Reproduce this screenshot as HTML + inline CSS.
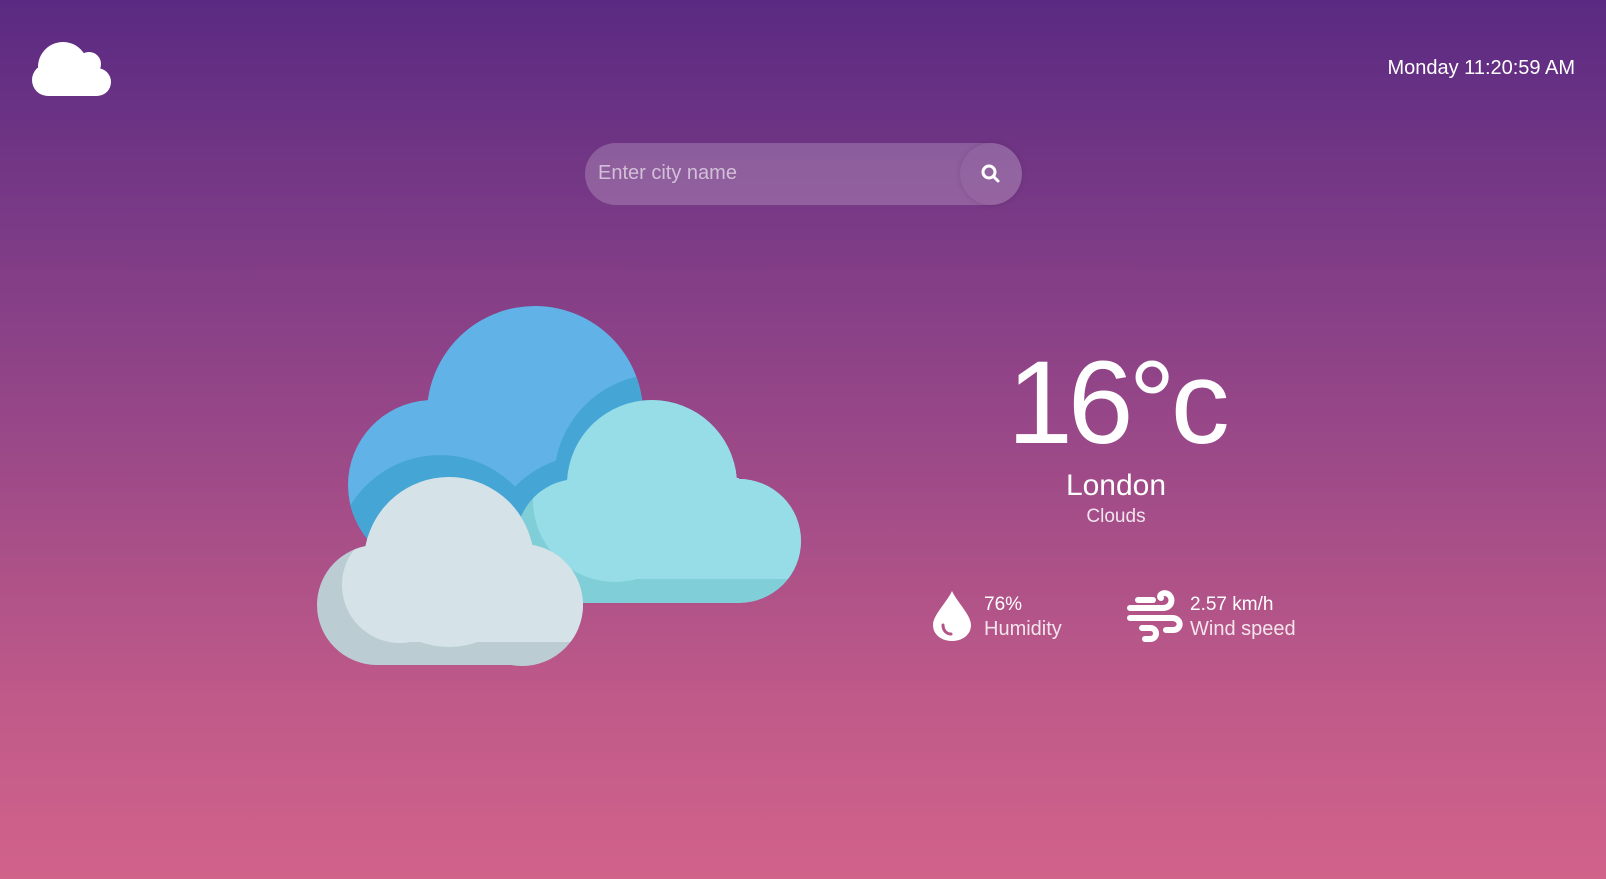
<!DOCTYPE html>
<html><head><meta charset="utf-8"><style>
html,body{margin:0;padding:0}
body{width:1606px;height:879px;overflow:hidden;position:relative;background:linear-gradient(180deg,#5a2a82 0%,#7a3a86 25%,#a04b88 55%,#c05a89 80%,#d1628a 100%);font-family:"Liberation Sans",sans-serif;color:#fff}
.abs{position:absolute}
</style></head><body>
<svg class="abs" style="left:0;top:0" width="1606" height="879">
  <g fill="#fff">
    <circle cx="63" cy="67" r="25"/>
    <circle cx="89" cy="64" r="12"/>
    <circle cx="97" cy="82" r="14"/>
    <circle cx="48" cy="80" r="16"/>
    <rect x="48" y="68" width="49" height="28"/>
  </g>
  <defs>
    <clipPath id="blue"><circle cx="535" cy="414" r="108"/><circle cx="433" cy="485" r="85"/></clipPath>
    <clipPath id="cyan"><circle cx="652" cy="485" r="85"/><circle cx="739" cy="541" r="62"/><circle cx="578" cy="541" r="62"/><rect x="578" y="478" width="161" height="125"/></clipPath>
    <clipPath id="grey"><circle cx="449" cy="562" r="85"/><circle cx="377" cy="605" r="60"/><circle cx="522" cy="605" r="61"/><rect x="377" y="544" width="145" height="121"/></clipPath>
  </defs>
  <g clip-path="url(#blue)">
    <rect x="300" y="290" width="400" height="300" fill="#61b3e7"/>
    <circle cx="660" cy="480" r="106" fill="#45a6d6"/>
    <circle cx="440" cy="560" r="105" fill="#45a6d6"/>
    <circle cx="590" cy="560" r="105" fill="#45a6d6"/>
  </g>
  <g clip-path="url(#cyan)">
    <rect x="500" y="380" width="320" height="240" fill="#80ced7"/>
    <circle cx="652" cy="485" r="85" fill="#97dde8"/>
    <circle cx="615" cy="500" r="82" fill="#97dde8"/>
    <rect x="600" y="470" width="210" height="109" fill="#97dde8"/>
    <circle cx="739" cy="520" r="58" fill="#97dde8"/>
  </g>
  <g clip-path="url(#grey)">
    <rect x="300" y="470" width="300" height="210" fill="#bbcdd2"/>
    <circle cx="449" cy="562" r="85" fill="#d5e2e7"/>
    <circle cx="400" cy="585" r="58" fill="#d5e2e7"/>
    <rect x="400" y="540" width="190" height="102" fill="#d5e2e7"/>
  </g>
  <path d="M952 591 C947 602 933 615 933 625 C933 635 942 641 952 641 C962 641 971 635 971 625 C971 615 957 602 952 591 Z" fill="#fff"/>
  <path d="M943 625 C943 631 947 634 951 634" stroke="#b25586" stroke-width="3" fill="none" stroke-linecap="round"/>
  <g stroke="#fff" stroke-width="6" fill="none" stroke-linecap="round">
    <path d="M1130 608 H1163 C1172 608 1174 598 1168 594 C1163 591 1158 596 1161 598"/>
    <path d="M1130 618 H1172 C1182 618 1182 630 1173 630 H1166"/>
    <path d="M1142 628 H1150 C1158 628 1158 639 1150 639 H1145"/>
    <path d="M1138 600 H1153"/>
  </g>
</svg>
<div class="abs" style="right:31px;top:57px;font-size:20px;">Monday 11:20:59 AM</div>
<div class="abs" style="left:585px;top:143px;width:437px;height:62px;border-radius:31px;background:rgba(255,255,255,0.2)"></div>
<div class="abs" style="left:598px;top:162px;font-size:20px;color:rgba(255,255,255,0.6)">Enter city name</div>
<div class="abs" style="left:960px;top:143px;width:62px;height:62px;border-radius:31px;background:rgba(255,255,255,0.03);box-shadow:0 0 6px rgba(0,0,0,0.12)"></div>
<svg class="abs" style="left:980px;top:163px" width="22" height="22"><circle cx="9" cy="9" r="6" stroke="#fff" stroke-width="3" fill="none"/><path d="M13.5 13.5 L18 18" stroke="#fff" stroke-width="3" stroke-linecap="round"/></svg>
<div class="abs" style="left:916px;width:400px;top:338px;text-align:center;font-size:118px;line-height:130px;letter-spacing:-5px">16°c</div>
<div class="abs" style="left:916px;width:400px;top:469px;text-align:center;font-size:30px">London</div>
<div class="abs" style="left:916px;width:400px;top:506px;text-align:center;font-size:19px;color:rgba(255,255,255,0.85)">Clouds</div>
<div class="abs" style="left:984px;top:594px;font-size:19px">76%</div>
<div class="abs" style="left:984px;top:618px;font-size:20px;color:rgba(255,255,255,0.85)">Humidity</div>
<div class="abs" style="left:1190px;top:594px;font-size:19px">2.57 km/h</div>
<div class="abs" style="left:1190px;top:618px;font-size:20px;color:rgba(255,255,255,0.85)">Wind speed</div>
</body></html>
